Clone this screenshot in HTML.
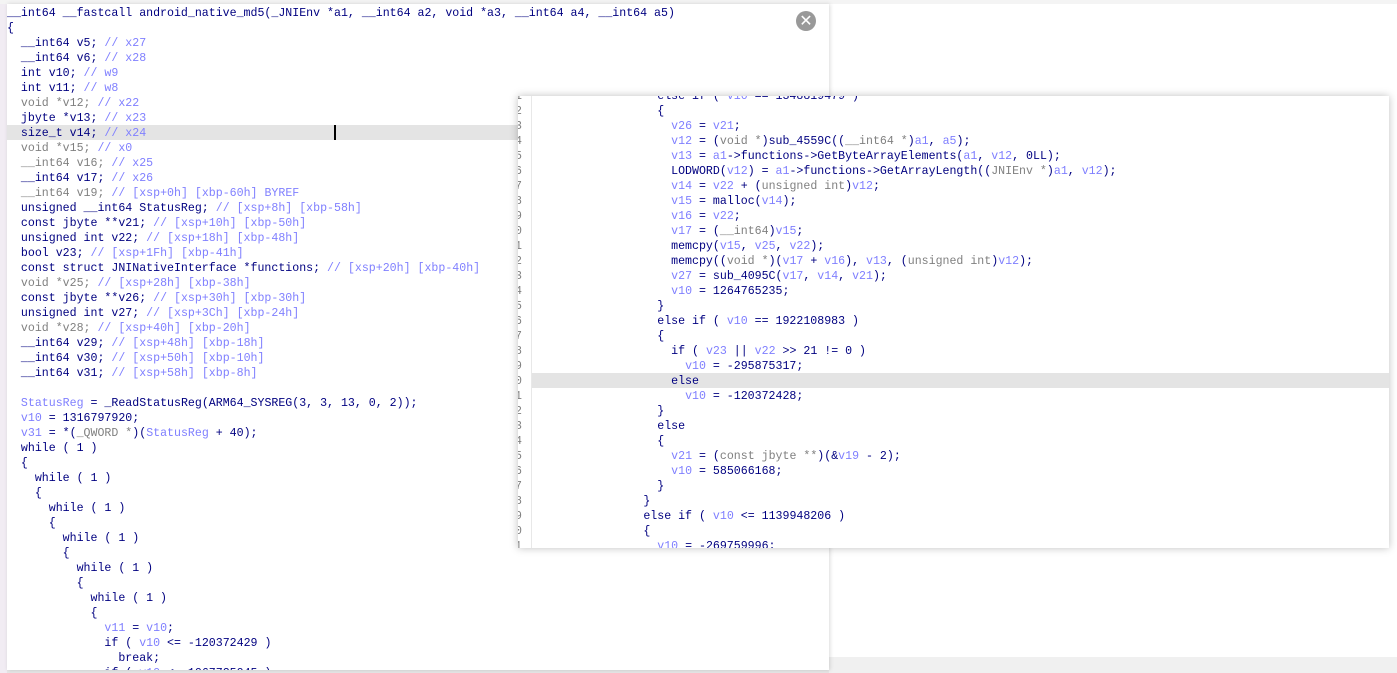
<!DOCTYPE html>
<html><head><meta charset="utf-8"><style>
html,body{margin:0;padding:0;width:1397px;height:673px;overflow:hidden;background:#fff;position:relative}
.code{font-family:"Liberation Mono",monospace;font-size:11.6px;line-height:15px;color:#000080;white-space:pre;margin:0}
.v{color:#7f7fff}.c{color:#8080ff}.g{color:#808080}
#left{position:absolute;left:7px;top:4px;width:822px;height:666px;background:#fff;overflow:hidden;box-shadow:1px 0 4px rgba(0,0,0,.15)}
#left pre{position:absolute;left:0;top:2px}
.hl{position:absolute;left:0;width:822px;height:15px;background:#e4e4e4}
#right{position:absolute;left:518px;top:96px;width:871px;height:452px;background:#fff;overflow:hidden;box-shadow:0 0 8px rgba(0,0,0,.25)}
#gut{position:absolute;left:0;top:0;width:13px;height:452px;border-right:1px solid #e8e8e8;background:#fff;overflow:hidden}
#gut pre{position:absolute;left:-3px;top:-7px;color:#808080}
#rc{position:absolute;left:14px;top:-7px}
</style></head><body>
<div style="position:absolute;left:0;top:0;width:7px;height:673px;background:#f1ecf3"></div>
<div style="position:absolute;left:0;top:0;width:1397px;height:4px;background:#f4f4f4"></div>
<div style="position:absolute;left:829px;top:657px;width:568px;height:16px;background:#f0f0f0"></div>
<div style="position:absolute;left:7px;top:670px;width:822px;height:3px;background:#e6e6e6"></div>
<div id="left">
<div class="hl" style="top:121px"></div>
<div style="position:absolute;left:327px;top:121px;width:2px;height:15px;background:#000"></div>
<div style="position:absolute;left:789px;top:7px;width:20px;height:20px;border-radius:50%;background:#999;color:#fff;font:16px/20px 'DejaVu Sans',sans-serif;text-align:center">✕</div>
<pre class="code">__int64 __fastcall android_native_md5(_JNIEnv *a1, __int64 a2, void *a3, __int64 a4, __int64 a5)
{
  __int64 v5; <span class="c">// x27</span>
  __int64 v6; <span class="c">// x28</span>
  int v10; <span class="c">// w9</span>
  int v11; <span class="c">// w8</span>
  <span class="g">void *v12;</span> <span class="c">// x22</span>
  jbyte *v13; <span class="c">// x23</span>
  size_t v14; <span class="c">// x24</span>
  <span class="g">void *v15;</span> <span class="c">// x0</span>
  <span class="g">__int64 v16;</span> <span class="c">// x25</span>
  __int64 v17; <span class="c">// x26</span>
  <span class="g">__int64 v19;</span> <span class="c">// [xsp+0h] [xbp-60h] BYREF</span>
  unsigned __int64 StatusReg; <span class="c">// [xsp+8h] [xbp-58h]</span>
  const jbyte **v21; <span class="c">// [xsp+10h] [xbp-50h]</span>
  unsigned int v22; <span class="c">// [xsp+18h] [xbp-48h]</span>
  bool v23; <span class="c">// [xsp+1Fh] [xbp-41h]</span>
  const struct JNINativeInterface *functions; <span class="c">// [xsp+20h] [xbp-40h]</span>
  <span class="g">void *v25;</span> <span class="c">// [xsp+28h] [xbp-38h]</span>
  const jbyte **v26; <span class="c">// [xsp+30h] [xbp-30h]</span>
  unsigned int v27; <span class="c">// [xsp+3Ch] [xbp-24h]</span>
  <span class="g">void *v28;</span> <span class="c">// [xsp+40h] [xbp-20h]</span>
  __int64 v29; <span class="c">// [xsp+48h] [xbp-18h]</span>
  __int64 v30; <span class="c">// [xsp+50h] [xbp-10h]</span>
  __int64 v31; <span class="c">// [xsp+58h] [xbp-8h]</span>

  <span class="v">StatusReg</span> = _ReadStatusReg(ARM64_SYSREG(3, 3, 13, 0, 2));
  <span class="v">v10</span> = 1316797920;
  <span class="v">v31</span> = *(<span class="g">_QWORD *</span>)(<span class="v">StatusReg</span> + 40);
  while ( 1 )
  {
    while ( 1 )
    {
      while ( 1 )
      {
        while ( 1 )
        {
          while ( 1 )
          {
            while ( 1 )
            {
              <span class="v">v11</span> = <span class="v">v10</span>;
              if ( <span class="v">v10</span> &lt;= -120372429 )
                break;
              if ( <span class="v">v10</span> &lt;= 1067725045 )</pre>
</div>
<div id="right">
<div class="hl" style="top:277px;left:14px;width:857px"></div>
<div id="gut"><pre class="code">1
2
3
4
5
6
7
8
9
0
1
2
3
4
5
6
7
8
9
0
1
2
3
4
5
6
7
8
9
0
1</pre></div>
<pre class="code" id="rc">                  else if ( <span class="v">v10</span> == 1348819479 )
                  {
                    <span class="v">v26</span> = <span class="v">v21</span>;
                    <span class="v">v12</span> = (<span class="g">void *</span>)sub_4559C((<span class="g">__int64 *</span>)<span class="v">a1</span>, <span class="v">a5</span>);
                    <span class="v">v13</span> = <span class="v">a1</span>-&gt;functions-&gt;GetByteArrayElements(<span class="v">a1</span>, <span class="v">v12</span>, 0LL);
                    LODWORD(<span class="v">v12</span>) = <span class="v">a1</span>-&gt;functions-&gt;GetArrayLength((<span class="g">JNIEnv *</span>)<span class="v">a1</span>, <span class="v">v12</span>);
                    <span class="v">v14</span> = <span class="v">v22</span> + (<span class="g">unsigned int</span>)<span class="v">v12</span>;
                    <span class="v">v15</span> = malloc(<span class="v">v14</span>);
                    <span class="v">v16</span> = <span class="v">v22</span>;
                    <span class="v">v17</span> = (<span class="g">__int64</span>)<span class="v">v15</span>;
                    memcpy(<span class="v">v15</span>, <span class="v">v25</span>, <span class="v">v22</span>);
                    memcpy((<span class="g">void *</span>)(<span class="v">v17</span> + <span class="v">v16</span>), <span class="v">v13</span>, (<span class="g">unsigned int</span>)<span class="v">v12</span>);
                    <span class="v">v27</span> = sub_4095C(<span class="v">v17</span>, <span class="v">v14</span>, <span class="v">v21</span>);
                    <span class="v">v10</span> = 1264765235;
                  }
                  else if ( <span class="v">v10</span> == 1922108983 )
                  {
                    if ( <span class="v">v23</span> || <span class="v">v22</span> &gt;&gt; 21 != 0 )
                      <span class="v">v10</span> = -295875317;
                    else
                      <span class="v">v10</span> = -120372428;
                  }
                  else
                  {
                    <span class="v">v21</span> = (<span class="g">const jbyte **</span>)(&amp;<span class="v">v19</span> - 2);
                    <span class="v">v10</span> = 585066168;
                  }
                }
                else if ( <span class="v">v10</span> &lt;= 1139948206 )
                {
                  <span class="v">v10</span> = -269759996;</pre>
</div>
</body></html>
